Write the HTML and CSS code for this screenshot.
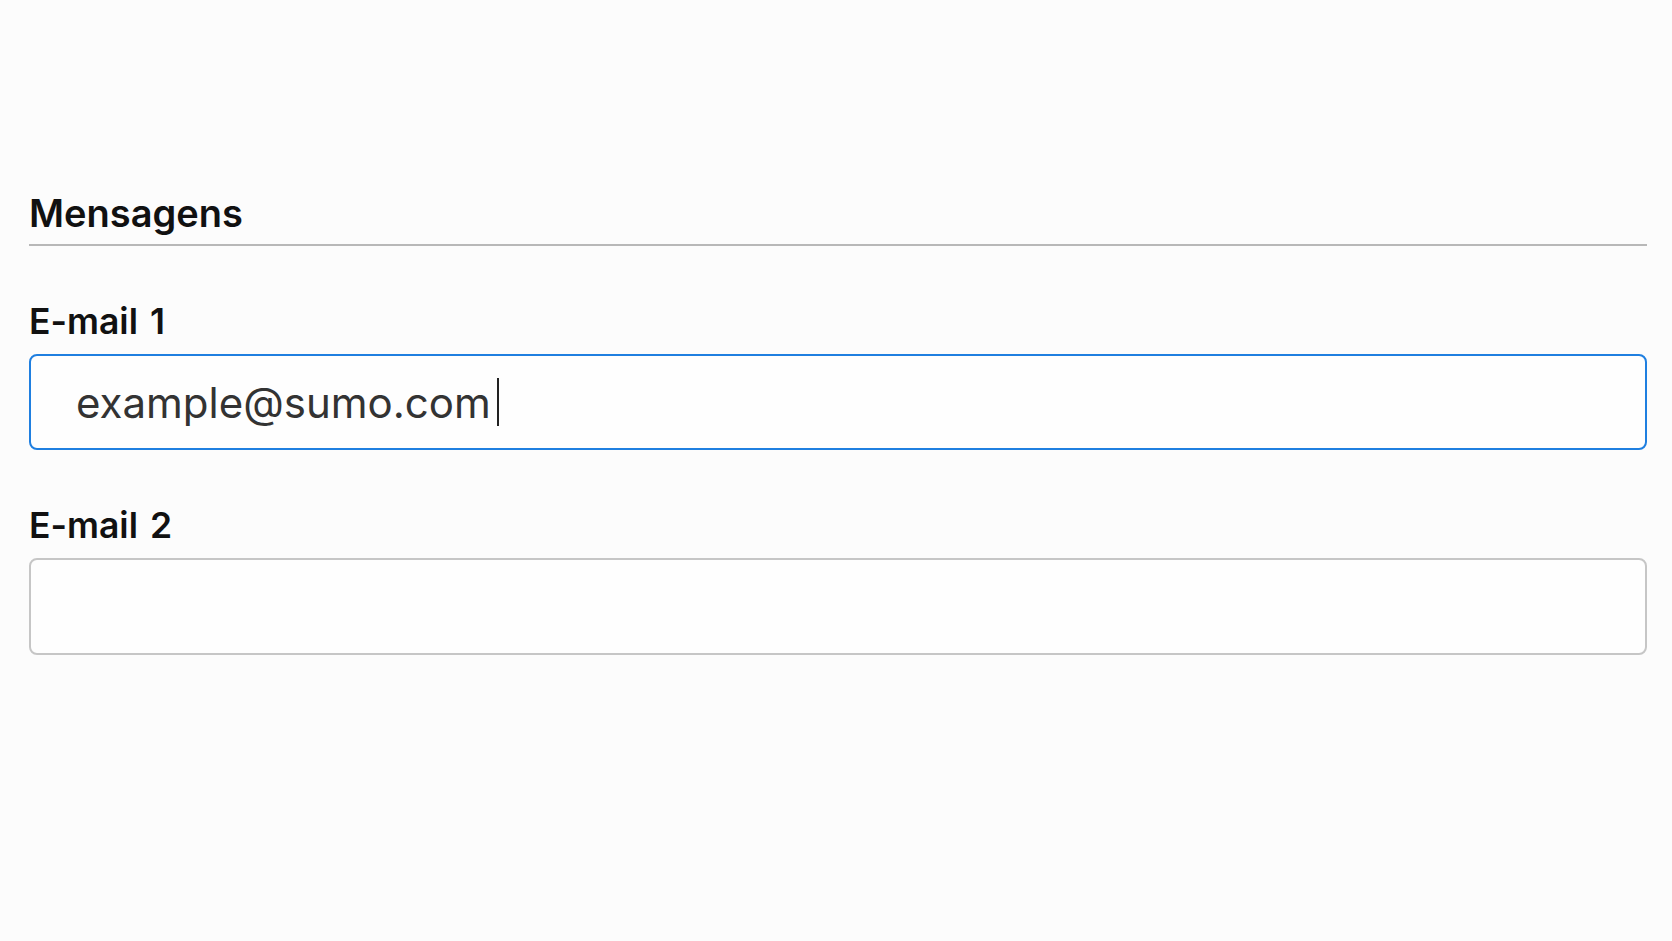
FILE: index.html
```html
<!DOCTYPE html>
<html lang="pt">
<head>
  <meta charset="UTF-8">
  <meta name="viewport" content="width=device-width, initial-scale=1.0">
  <title>Mensagens</title>
  <link rel="stylesheet" href="styles.css">
</head>
<body>
  <section class="settings">
    <h2 class="section-title">Mensagens</h2>

    <div class="field">
      <label class="field-label" for="email1">E-mail 1</label>
      <div class="text-input focused" id="email1">
        <span class="value">example@sumo.com</span><span class="caret"></span>
      </div>
    </div>

    <div class="field">
      <label class="field-label" for="email2">E-mail 2</label>
      <div class="text-input tall" id="email2"></div>
    </div>
  </section>
</body>
</html>
```

FILE: styles.css
```css
body {
  margin: 0;
  background-color: #fcfcfc;
  font-family: Inter, "Noto Sans", "Liberation Sans", sans-serif;
  color: #111;
}

.settings {
  padding: 191px 25px 0 29px;
}

.section-title {
  margin: 0;
  padding-bottom: 9px;
  font-size: 38px;
  line-height: 44px;
  font-weight: 600;
  color: #111;
  border-bottom: 2px solid #b8b8b8;
}

.field {
  margin-top: 54px;
}

.field + .field {
  margin-top: 54px;
}

.field-label {
  display: block;
  font-size: 35.5px;
  line-height: 44px;
  font-weight: 600;
  color: #111;
  word-spacing: 3px;
}

.text-input {
  box-sizing: border-box;
  margin-top: 10px;
  height: 96px;
  padding: 0 45px;
  display: flex;
  align-items: center;
  background-color: #fefefe;
  border: 2px solid #c6c6c6;
  border-radius: 8px;
  font-size: 42px;
  color: #333;
}

.text-input.tall {
  height: 97px;
}

.text-input.focused {
  border-color: #1f7fe0;
}

.caret {
  display: inline-block;
  width: 2px;
  height: 48px;
  margin-left: 6px;
  background-color: #222;
}
```
